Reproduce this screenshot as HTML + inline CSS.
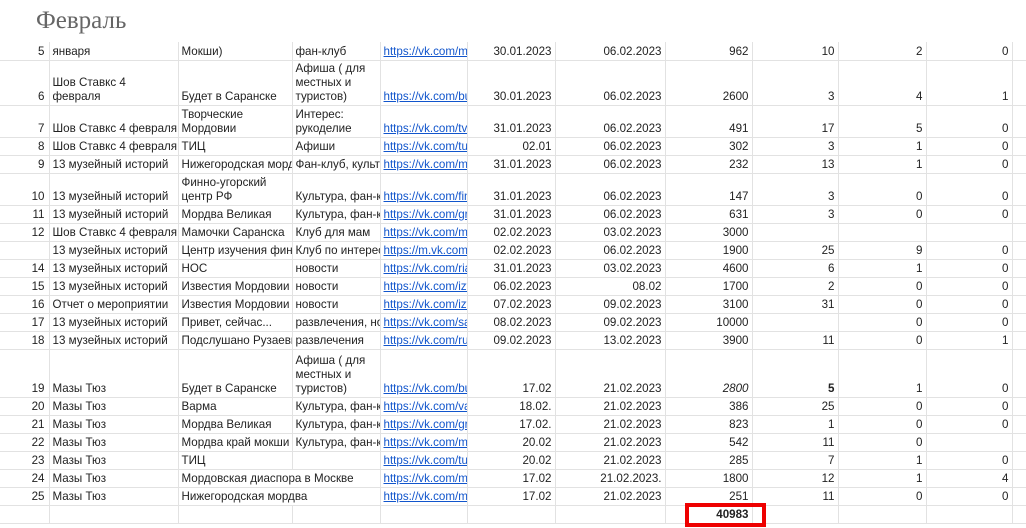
<!DOCTYPE html>
<html><head><meta charset="utf-8"><style>
body{margin:0;width:1026px;height:528px;overflow:hidden;background:#fff;font-family:"Liberation Sans",Arial,sans-serif;font-size:11.6px;color:#222;position:relative}
.t{position:absolute;left:36px;top:7px;font-family:"Liberation Serif",serif;font-size:25px;color:#666}
table{position:absolute;left:0;top:42px;border-collapse:collapse;table-layout:fixed;width:1026px}
td{border:1px solid #e2e2e2;padding:0 3px 1px 3px;vertical-align:bottom;overflow:hidden;white-space:nowrap;line-height:14px}
tr:first-child td{border-top:none}
td.n{text-align:right;border-left:none;padding-right:4px}
td.r{text-align:right}
td.w{white-space:normal}
a{color:#1155cc;text-decoration:underline}
.box{position:absolute;left:685px;top:503px;width:73px;height:16px;border:4px solid #ee0000}
</style></head><body>
<div class="t">Февраль</div>
<table>
<colgroup><col style="width:49px"><col style="width:129px"><col style="width:114px"><col style="width:88px"><col style="width:87px"><col style="width:88px"><col style="width:110px"><col style="width:87px"><col style="width:86px"><col style="width:88px"><col style="width:86px"><col style="width:14px"></colgroup>
<tr style="height:18px"><td class="n">5</td><td>января</td><td>Мокши)</td><td>фан-клуб</td><td><a>https://vk.com/m</a></td><td class="r">30.01.2023</td><td class="r">06.02.2023</td><td class="r">962</td><td class="r">10</td><td class="r">2</td><td class="r">0</td><td></td></tr>
<tr style="height:45px"><td class="n">6</td><td class="w">Шов Ставкс 4<br>февраля</td><td>Будет в Саранске</td><td class="w">Афиша ( для<br>местных и<br>туристов)</td><td><a>https://vk.com/bu</a></td><td class="r">30.01.2023</td><td class="r">06.02.2023</td><td class="r">2600</td><td class="r">3</td><td class="r">4</td><td class="r">1</td><td></td></tr>
<tr style="height:32px"><td class="n">7</td><td>Шов Ставкс 4 февраля</td><td class="w">Творческие<br>Мордовии</td><td class="w">Интерес:<br>рукоделие</td><td><a>https://vk.com/tv</a></td><td class="r">31.01.2023</td><td class="r">06.02.2023</td><td class="r">491</td><td class="r">17</td><td class="r">5</td><td class="r">0</td><td></td></tr>
<tr style="height:18px"><td class="n">8</td><td>Шов Ставкс 4 февраля</td><td>ТИЦ</td><td>Афиши</td><td><a>https://vk.com/tu</a></td><td class="r">02.01</td><td class="r">06.02.2023</td><td class="r">302</td><td class="r">3</td><td class="r">1</td><td class="r">0</td><td></td></tr>
<tr style="height:18px"><td class="n">9</td><td>13 музейный историй</td><td>Нижегородская мордва</td><td>Фан-клуб, культура</td><td><a>https://vk.com/m</a></td><td class="r">31.01.2023</td><td class="r">06.02.2023</td><td class="r">232</td><td class="r">13</td><td class="r">1</td><td class="r">0</td><td></td></tr>
<tr style="height:32px"><td class="n">10</td><td>13 музейный историй</td><td class="w">Финно-угорский<br>центр РФ</td><td>Культура, фан-клуб</td><td><a>https://vk.com/fin</a></td><td class="r">31.01.2023</td><td class="r">06.02.2023</td><td class="r">147</td><td class="r">3</td><td class="r">0</td><td class="r">0</td><td></td></tr>
<tr style="height:18px"><td class="n">11</td><td>13 музейный историй</td><td>Мордва Великая</td><td>Культура, фан-клуб</td><td><a>https://vk.com/gr</a></td><td class="r">31.01.2023</td><td class="r">06.02.2023</td><td class="r">631</td><td class="r">3</td><td class="r">0</td><td class="r">0</td><td></td></tr>
<tr style="height:18px"><td class="n">12</td><td>Шов Ставкс 4 февраля</td><td>Мамочки Саранска</td><td>Клуб для мам</td><td><a>https://vk.com/m</a></td><td class="r">02.02.2023</td><td class="r">03.02.2023</td><td class="r">3000</td><td></td><td></td><td></td><td></td></tr>
<tr style="height:18px"><td class="n"></td><td>13 музейных историй</td><td>Центр изучения финно</td><td>Клуб по интересам</td><td><a>https://m.vk.com</a></td><td class="r">02.02.2023</td><td class="r">06.02.2023</td><td class="r">1900</td><td class="r">25</td><td class="r">9</td><td class="r">0</td><td></td></tr>
<tr style="height:18px"><td class="n">14</td><td>13 музейных историй</td><td>НОС</td><td>новости</td><td><a>https://vk.com/ria</a></td><td class="r">31.01.2023</td><td class="r">03.02.2023</td><td class="r">4600</td><td class="r">6</td><td class="r">1</td><td class="r">0</td><td></td></tr>
<tr style="height:18px"><td class="n">15</td><td>13 музейных историй</td><td>Известия Мордовии</td><td>новости</td><td><a>https://vk.com/izv</a></td><td class="r">06.02.2023</td><td class="r">08.02</td><td class="r">1700</td><td class="r">2</td><td class="r">0</td><td class="r">0</td><td></td></tr>
<tr style="height:18px"><td class="n">16</td><td>Отчет о мероприятии</td><td>Известия Мордовии</td><td>новости</td><td><a>https://vk.com/izv</a></td><td class="r">07.02.2023</td><td class="r">09.02.2023</td><td class="r">3100</td><td class="r">31</td><td class="r">0</td><td class="r">0</td><td></td></tr>
<tr style="height:18px"><td class="n">17</td><td>13 музейных историй</td><td>Привет, сейчас...</td><td>развлечения, новости</td><td><a>https://vk.com/sa</a></td><td class="r">08.02.2023</td><td class="r">09.02.2023</td><td class="r">10000</td><td></td><td class="r">0</td><td class="r">0</td><td></td></tr>
<tr style="height:18px"><td class="n">18</td><td>13 музейных историй</td><td>Подслушано Рузаевка</td><td>развлечения</td><td><a>https://vk.com/ru</a></td><td class="r">09.02.2023</td><td class="r">13.02.2023</td><td class="r">3900</td><td class="r">11</td><td class="r">0</td><td class="r">1</td><td></td></tr>
<tr style="height:48px"><td class="n">19</td><td>Мазы Тюз</td><td>Будет в Саранске</td><td class="w">Афиша ( для<br>местных и<br>туристов)</td><td><a>https://vk.com/bu</a></td><td class="r">17.02</td><td class="r">21.02.2023</td><td class="r"><i>2800</i></td><td class="r"><b>5</b></td><td class="r">1</td><td class="r">0</td><td></td></tr>
<tr style="height:18px"><td class="n">20</td><td>Мазы Тюз</td><td>Варма</td><td>Культура, фан-клуб</td><td><a>https://vk.com/va</a></td><td class="r">18.02.</td><td class="r">21.02.2023</td><td class="r">386</td><td class="r">25</td><td class="r">0</td><td class="r">0</td><td></td></tr>
<tr style="height:18px"><td class="n">21</td><td>Мазы Тюз</td><td>Мордва Великая</td><td>Культура, фан-клуб</td><td><a>https://vk.com/gr</a></td><td class="r">17.02.</td><td class="r">21.02.2023</td><td class="r">823</td><td class="r">1</td><td class="r">0</td><td class="r">0</td><td></td></tr>
<tr style="height:18px"><td class="n">22</td><td>Мазы Тюз</td><td>Мордва край мокши</td><td>Культура, фан-клуб</td><td><a>https://vk.com/m</a></td><td class="r">20.02</td><td class="r">21.02.2023</td><td class="r">542</td><td class="r">11</td><td class="r">0</td><td></td><td></td></tr>
<tr style="height:18px"><td class="n">23</td><td>Мазы Тюз</td><td>ТИЦ</td><td></td><td><a>https://vk.com/tu</a></td><td class="r">20.02</td><td class="r">21.02.2023</td><td class="r">285</td><td class="r">7</td><td class="r">1</td><td class="r">0</td><td></td></tr>
<tr style="height:18px"><td class="n">24</td><td>Мазы Тюз</td><td colspan="2">Мордовская диаспора в Москве</td><td><a>https://vk.com/m</a></td><td class="r">17.02</td><td class="r">21.02.2023.</td><td class="r">1800</td><td class="r">12</td><td class="r">1</td><td class="r">4</td><td></td></tr>
<tr style="height:18px"><td class="n">25</td><td>Мазы Тюз</td><td colspan="2">Нижегородская мордва</td><td><a>https://vk.com/m</a></td><td class="r">17.02</td><td class="r">21.02.2023</td><td class="r">251</td><td class="r">11</td><td class="r">0</td><td class="r">0</td><td></td></tr>
<tr style="height:18px"><td class="n"></td><td></td><td></td><td></td><td></td><td></td><td></td><td class="r"><b>40983</b></td><td></td><td></td><td></td><td></td></tr>
</table>
<div class="box"></div>
</body></html>
